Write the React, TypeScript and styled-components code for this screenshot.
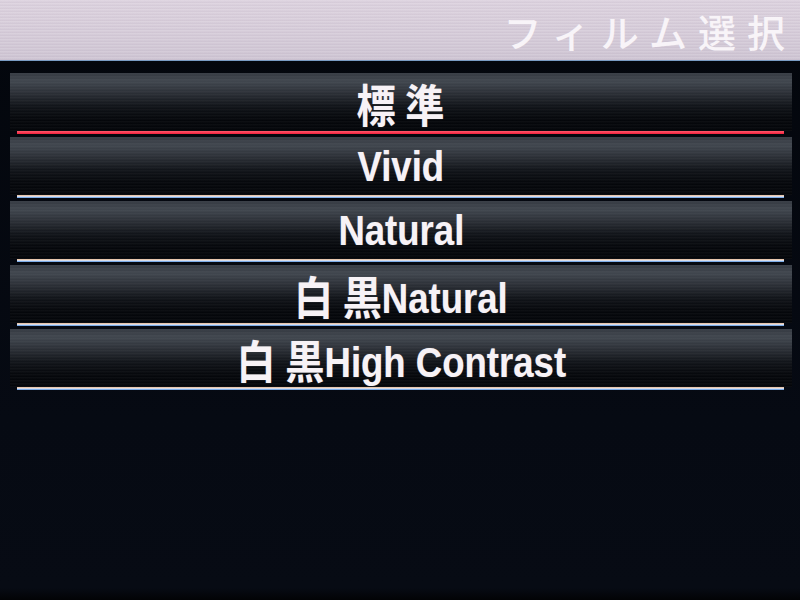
import React from 'react';
import styled, { createGlobalStyle } from 'styled-components';

const GlobalStyle = createGlobalStyle`
    html, body {
        margin: 0;
        padding: 0;
        background: #04070d;
    }
`

const Screen = styled.div`
    width: 800px;
    height: 600px;
    overflow: hidden;
    display: flex;
    flex-direction: column;
    background: linear-gradient(180deg, #03060c 0%, #060a13 70%, #070b14 98%, #020305 100%);
    font-family: "Liberation Sans", Arial, "Noto Sans CJK JP", sans-serif;
`

const TitleBar = styled.header`
    height: 61px;
    flex-shrink: 0;
    display: flex;
    align-items: center;
    justify-content: flex-end;
    padding-right: 4px;
    box-sizing: border-box;
    border-bottom: 1px solid #7a9cc4;
    background:
        repeating-linear-gradient(180deg, rgba(255, 255, 255, 0.08) 0px, rgba(255, 255, 255, 0.08) 1px, rgba(120, 100, 130, 0.06) 2px, rgba(120, 100, 130, 0.06) 3px),
        linear-gradient(180deg, #ddd3df 0%, #d6ccd9 60%, #cfc6d4 100%);
`

const Title = styled.h1`
    margin: 0;
    font-family: "Noto Sans CJK JP", sans-serif;
    font-weight: 500;
    font-size: 38px;
    letter-spacing: 11px;
    color: #f8f4f8;
`

const List = styled.ul`
    list-style: none;
    margin: 0;
    padding: 12px 8px 0 10px;
    display: flex;
    flex-direction: column;
    gap: 3px;
`

const Row = styled.li`
    display: flex;
    flex-direction: column;
`

const Bar = styled.div`
    height: 58px;
    padding-top: 2px;
    box-sizing: border-box;
    display: flex;
    align-items: center;
    justify-content: center;
    background:
        repeating-linear-gradient(180deg, rgba(255, 255, 255, 0.03) 0px, rgba(255, 255, 255, 0.03) 1px, transparent 2px, transparent 3px),
        linear-gradient(180deg, #343941 0%, #40464e 14%, #2c3037 34%, #101318 58%, #05070b 80%, #04060a 100%);
`

const Label = styled.span`
    display: inline-block;
    transform: scaleX(0.87);
    font-size: 42px;
    font-weight: 700;
    color: #f7f2f6;
    white-space: nowrap;
    text-shadow: 0 0 1px rgba(255, 255, 255, 0.4);
`

// spacing sits between the two kanji only, latin text follows straight on
const Kanji = styled.span`
    font-family: "Noto Sans CJK JP", sans-serif;
    font-size: 45px;
    letter-spacing: 11px;
    margin-right: -11px;
    vertical-align: -2px;
`

const Rule = styled.div<{ $active?: boolean }>`
    height: 3px;
    margin: 0 8px 0 7px;
    background: ${p => p.$active
        ? 'linear-gradient(180deg, #ff5a6c 0%, #f2203c 100%)'
        : 'linear-gradient(180deg, #e8b58a 0%, #e6e4ea 45%, #4f94e6 100%)'};
`

type filmType = {
    kanji?: string
    latin?: string
}

const films: filmType[] = [
    { kanji: '標準' },
    { latin: 'Vivid' },
    { latin: 'Natural' },
    { kanji: '白黒', latin: 'Natural' },
    { kanji: '白黒', latin: 'High Contrast' },
]

const App = (): JSX.Element => {
    return (
        <Screen>
            <GlobalStyle />
            <TitleBar>
                <Title>フィルム選択</Title>
            </TitleBar>
            <List>
                {films.map((f, i) => (
                    <Row key={i}>
                        <Bar>
                            <Label>
                                {f.kanji && <Kanji>{f.kanji}</Kanji>}
                                {f.latin}
                            </Label>
                        </Bar>
                        <Rule $active={i === 0} />
                    </Row>
                ))}
            </List>
        </Screen>
    )
}

export default App
